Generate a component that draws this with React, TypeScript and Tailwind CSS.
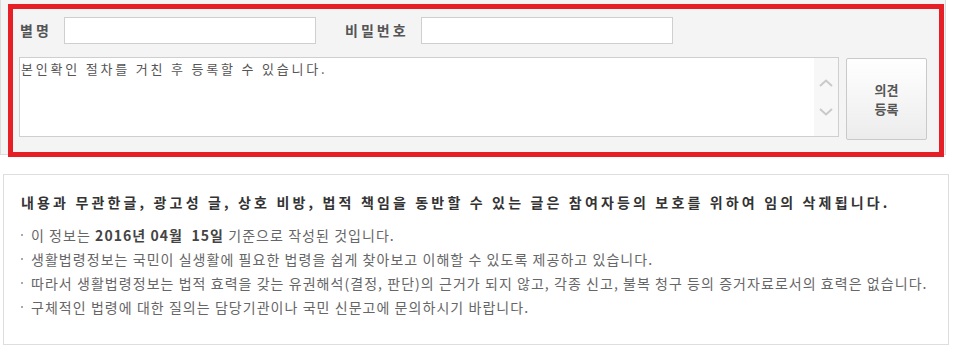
import React from 'react';

const font = { fontFamily: '"Noto Sans CJK KR", "Noto Sans", sans-serif' };

const notices = [
  <>이 정보는 <b className="text-[#444]">2016년 04월&nbsp; 15일</b> 기준으로 작성된 것입니다.</>,
  <>생활법령정보는 국민이 실생활에 필요한 법령을 쉽게 찾아보고 이해할 수 있도록 제공하고 있습니다.</>,
  <>따라서 생활법령정보는 법적 효력을 갖는 유권해석(결정, 판단)의 근거가 되지 않고, 각종 신고, 불복 청구 등의 증거자료로서의 효력은 없습니다.</>,
  <>구체적인 법령에 대한 질의는 담당기관이나 국민 신문고에 문의하시기 바랍니다.</>,
];

const Chevron: React.FC<{ up?: boolean }> = ({ up }) => (
  <svg width="14" height="8" viewBox="0 0 14 8" fill="none">
    <path
      d={up ? 'M1 7 L7 1.5 L13 7' : 'M1 1 L7 6.5 L13 1'}
      stroke="#c9c9c9"
      strokeWidth="2"
    />
  </svg>
);

const App: React.FC = () => {
  return (
    <div className="w-[960px] h-[355px] bg-white overflow-hidden" style={font}>
      {/* 의견 입력 */}
      <div className="w-[946px] h-[155px] bg-[#f4f4f4] border-l border-r border-b border-[#dcdcdc] pl-[7px] pt-[4px]">
        <div className="w-[936px] h-[153px] border-[5px] border-[#e61f27] pl-[6px] pt-[8px]">
          <div className="flex items-center">
            <label className="w-[44px] ml-[1px] text-[14px] font-bold text-[#555] tracking-[3px]">별명</label>
            <input
              type="text"
              className="w-[252px] h-[27px] bg-white border border-[#cfcfcf] outline-none"
            />
            <label className="ml-[29px] w-[76px] text-[14px] font-bold text-[#555] tracking-[3px]">비밀번호</label>
            <input
              type="password"
              className="w-[252px] h-[27px] bg-white border border-[#cfcfcf] outline-none"
            />
          </div>

          <div className="flex items-start mt-[13px]">
            <div className="w-[820px] h-[80px] bg-white border border-[#cfcfcf] flex">
              <p className="flex-1 pl-[1px] pt-[1px] text-[13px] leading-[20px] text-[#555] tracking-[2.8px]">
                본인확인 절차를 거친 후 등록할 수 있습니다.
              </p>
              <div className="w-[24px] bg-[#f7f7f7] flex flex-col items-center pt-[21px] gap-[21px]">
                <Chevron up />
                <Chevron />
              </div>
            </div>
            <button className="ml-[7px] mt-[1px] w-[81px] h-[82px] rounded-[2px] border border-[#c9c9c9] bg-gradient-to-b from-white to-[#ececec] text-[13px] leading-[19px] font-bold text-[#555]">
              의견
              <br />
              등록
            </button>
          </div>
        </div>
      </div>

      {/* 안내 */}
      <div className="ml-[3px] mt-[19px] w-[946px] h-[171px] border border-[#dedede] pl-[17px] pt-[17px]">
        <h3 className="text-[14px] leading-[20px] font-bold text-[#333] tracking-[3.15px]">
          내용과 무관한글, 광고성 글, 상호 비방, 법적 책임을 동반할 수 있는 글은 참여자등의 보호를 위하여 임의 삭제됩니다.
        </h3>
        <ul className="mt-[11px]">
          {notices.map((n, i) => (
            <li key={i} className="flex items-center text-[14px] leading-[24px] text-[#666] tracking-[1.05px]">
              <span className="w-[2px] h-[2px] bg-[#aaa] mr-[8px]" />
              <span>{n}</span>
            </li>
          ))}
        </ul>
      </div>
    </div>
  );
};

export default App;
